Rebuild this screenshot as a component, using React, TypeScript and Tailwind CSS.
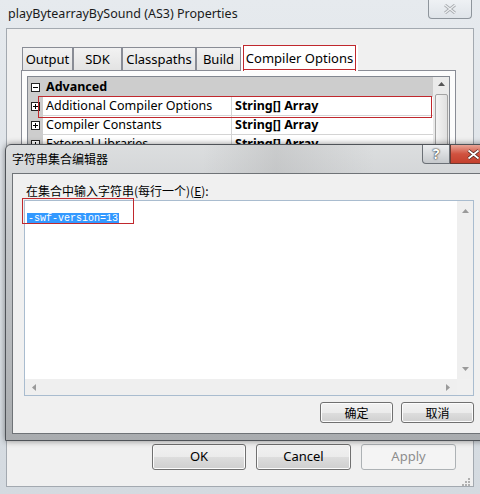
import React from "react";

const sans = "font-['Noto_Sans','Noto_Sans_CJK_SC',sans-serif]";
const cjk = "font-['Noto_Sans_CJK_SC','Noto_Sans',sans-serif]";

const tabs = [
  { label: "Output", w: "w-[51px]" },
  { label: "SDK", w: "w-[49px]" },
  { label: "Classpaths", w: "w-[74px]" },
  { label: "Build", w: "w-[45px]" },
];

const rows = [
  { name: "Additional Compiler Options", value: "String[] Array" },
  { name: "Compiler Constants", value: "String[] Array" },
  { name: "External Libraries", value: "String[] Array" },
];

const btn =
  "flex items-center justify-center rounded-[3px] border border-[#707070] bg-[linear-gradient(to_bottom,#f2f2f2_0%,#ebebeb_50%,#dddddd_51%,#cfcfcf_100%)] shadow-[inset_0_0_0_1px_#fcfcfc]";

const PlusBox = ({ minus }: { minus?: boolean }) => (
  <svg width="9" height="9" viewBox="0 0 9 9" className="shrink-0">
    <rect x="0.5" y="0.5" width="8" height="8" fill="#fff" stroke="#222" />
    <line x1="2" y1="4.5" x2="7" y2="4.5" stroke="#000" />
    {!minus && <line x1="4.5" y1="2" x2="4.5" y2="7" stroke="#000" />}
  </svg>
);

const App = () => {
  return (
    <div
      className={`relative h-[494px] w-[480px] overflow-hidden bg-[linear-gradient(to_bottom,#e6eaee,#d4dae0)] ${sans} text-black`}
    >
      {/* main window title */}
      <div className="flex h-[28px] items-start">
        <span className="pl-[8px] pt-[6px] text-[12.5px] leading-[16px] text-[#1a1a1a]">
          playBytearrayBySound (AS3) Properties
        </span>
        <div className="ml-auto mr-[8px] flex h-[19px] w-[44px] items-center justify-center rounded-b-[4px] border border-t-0 border-[#8e959c] bg-[linear-gradient(to_bottom,#eef1f4,#dfe4e9)]">
          <svg width="12" height="10" viewBox="0 0 12 10">
            <path d="M1 1 L11 9 M11 1 L1 9" stroke="#a8acb0" strokeWidth="3" />
            <path d="M1 1 L11 9 M11 1 L1 9" stroke="#eef0f2" strokeWidth="1.2" />
          </svg>
        </div>
      </div>

      {/* main client area */}
      <div className="mx-[6px] h-[459px] border border-[#a3a9b0] bg-[#f0f0f0] pl-[14px] pt-[14px]">
        <div className="w-[435px]">
          {/* tab headers */}
          <div className="flex h-[27px] items-end pl-[1px] text-[13px]">
            {tabs.map((t) => (
              <div
                key={t.label}
                className={`${t.w} flex h-[23px] items-center justify-center border border-b-0 border-[#898c95] bg-[linear-gradient(to_bottom,#f2f2f2,#e3e3e3)] leading-none`}
              >
                {t.label}
              </div>
            ))}
            <div className="relative -mb-[1px] flex h-[26px] w-[117px] items-center justify-center bg-white leading-none">
              <div className="absolute inset-x-[2px] inset-y-0 border border-[#c0282d] border-b-0" />
              <div className="absolute inset-x-[2px] bottom-[1px] h-[1px] bg-[#c0282d]" />
              Compiler Options
            </div>
          </div>

          {/* tab panel */}
          <div className="h-[367px] border border-[#898c95] bg-[#fcfcfc] p-[5px]">
            <div className="relative flex h-[200px] w-[423px] border border-[#828790] bg-white">
              <div className="flex-1 text-[12.5px] leading-none">
                <div className="flex h-[20px] items-center bg-[#cdcdcd] pl-[3px]">
                  <PlusBox minus />
                  <span className="ml-[6px] font-bold">Advanced</span>
                </div>
                {rows.map((r) => (
                  <div key={r.name} className="flex h-[19px] bg-[#cdcdcd]">
                    <div className="flex w-[15px] items-center pl-[3px]">
                      <PlusBox />
                    </div>
                    <div className="flex w-[189px] items-center border-b border-r border-[#d4d4d4] bg-white pl-[3px]">
                      {r.name}
                    </div>
                    <div className="flex flex-1 items-center border-b border-[#d4d4d4] bg-white pl-[3px] font-bold">
                      {r.value}
                    </div>
                  </div>
                ))}
              </div>
              <div className="flex w-[16px] flex-col items-center bg-[#eaeaea] pt-[5px]">
                <svg width="7" height="4" viewBox="0 0 7 4">
                  <path d="M0 4 L3.5 0 L7 4 Z" fill="#555" />
                </svg>
                <div className="mt-[8px] h-[120px] w-[13px] rounded-[2px] border border-[#a3a3a3] bg-[linear-gradient(to_right,#f4f4f4,#e0e0e0)]" />
              </div>
              {/* annotation */}
              <div className="absolute left-[10px] top-[19px] h-[22px] w-[394px] border border-[#c0282d]" />
            </div>
          </div>

          {/* dialog buttons */}
          <div className="mt-[7px] flex justify-end gap-[10px] text-[13px]">
            <div className={`${btn} h-[26px] w-[94px]`}>OK</div>
            <div className={`${btn} h-[26px] w-[95px]`}>Cancel</div>
            <div className="flex h-[26px] w-[95px] items-center justify-center rounded-[3px] border border-[#adb2b5] bg-[#f4f4f4] text-[#8d8d8d]">
              Apply
            </div>
          </div>
        </div>
      </div>
      {/* resize grip */}
      <svg className="absolute left-[462px] top-[478px]" width="9" height="9" viewBox="0 0 9 9">
        <g fill="#b0b0b0">
          <rect x="6" y="0" width="2" height="2" />
          <rect x="3" y="3" width="2" height="2" />
          <rect x="6" y="3" width="2" height="2" />
          <rect x="0" y="6" width="2" height="2" />
          <rect x="3" y="6" width="2" height="2" />
          <rect x="6" y="6" width="2" height="2" />
        </g>
      </svg>

      {/* string collection editor dialog */}
      <div className="absolute left-[5px] top-[144px] flex h-[297px] w-[493px] flex-col overflow-hidden rounded-t-[6px] border border-[#4f5358] bg-[linear-gradient(to_bottom,#dcdedf,#c4c7ca_30%,#a9acaf)] shadow-[0_0_6px_rgba(0,0,0,0.45)]">
        <div className="flex h-[28px] shrink-0 items-start bg-[linear-gradient(to_right,transparent_40%,rgba(150,150,150,0.25)_55%,transparent_75%)]">
          <span className={`pl-[6px] pt-[6px] text-[12px] leading-[16px] ${cjk}`}>字符串集合编辑器</span>
          <div className="ml-auto flex h-[19px] w-[28px] items-center justify-center rounded-bl-[4px] border border-t-0 border-[#6b7076] bg-[linear-gradient(to_bottom,#eceef0,#c6c9cc)] text-[14px] font-bold leading-none text-white [text-shadow:0_0_2px_#222,0_0_1px_#222]">
            ?
          </div>
          <div className="flex h-[19px] w-[47px] items-center justify-center border border-t-0 border-[#6b3a32] bg-[linear-gradient(to_bottom,#e9a597,#d0523f_50%,#c4402d)]">
            <svg width="13" height="11" viewBox="0 0 13 11">
              <path d="M1.5 1.5 L11.5 9.5 M11.5 1.5 L1.5 9.5" stroke="#4a2018" strokeWidth="3.4" />
              <path d="M1.5 1.5 L11.5 9.5 M11.5 1.5 L1.5 9.5" stroke="#fff" strokeWidth="1.8" />
            </svg>
          </div>
        </div>
        <div className="ml-[6px] mr-[7px] h-[261px] border border-[#6f7377] bg-[#f0f0f0]">
          <div className={`pl-[13px] pt-[9px] text-[12px] leading-[16px] ${cjk}`}>
            在集合中输入字符串(每行一个)(<span className="underline">E</span>):
          </div>
          <div className="relative ml-[11px] mt-[1px] flex h-[196px] w-[450px] flex-col border border-[#a9bccf] bg-white">
            <div className="flex flex-1">
              <div className="flex-1 pl-[2px] pt-[2px]">
                <span className="bg-[#3399ff] px-[1px] font-['Liberation_Mono',monospace] text-[10px] leading-[13px] text-white">
                  -swf-version=13
                </span>
              </div>
              <div className="flex w-[16px] flex-col items-center justify-between bg-[#efefef] py-[8px]">
                <svg width="7" height="4" viewBox="0 0 7 4">
                  <path d="M0 4 L3.5 0 L7 4 Z" fill="#9a9a9a" />
                </svg>
                <svg width="7" height="4" viewBox="0 0 7 4">
                  <path d="M0 0 L3.5 4 L7 0 Z" fill="#9a9a9a" />
                </svg>
              </div>
            </div>
            <div className="flex h-[16px] shrink-0">
              <div className="flex flex-1 items-center justify-between bg-[#efefef] px-[7px]">
                <svg width="4" height="7" viewBox="0 0 4 7">
                  <path d="M4 0 L0 3.5 L4 7 Z" fill="#9a9a9a" />
                </svg>
                <svg width="4" height="7" viewBox="0 0 4 7">
                  <path d="M0 0 L4 3.5 L0 7 Z" fill="#9a9a9a" />
                </svg>
              </div>
              <div className="w-[16px] bg-[#f0f0f0]" />
            </div>
            {/* annotation */}
            <div className="absolute -left-[3px] -top-[3px] h-[26px] w-[112px] border border-[#c0282d]" />
          </div>
          <div className={`ml-[11px] mt-[6px] flex w-[450px] justify-end gap-[8px] text-[12px] ${cjk}`}>
            <div className={`${btn} h-[21px] w-[73px]`}>确定</div>
            <div className={`${btn} h-[21px] w-[73px]`}>取消</div>
          </div>
        </div>
      </div>
    </div>
  );
};

export default App;
